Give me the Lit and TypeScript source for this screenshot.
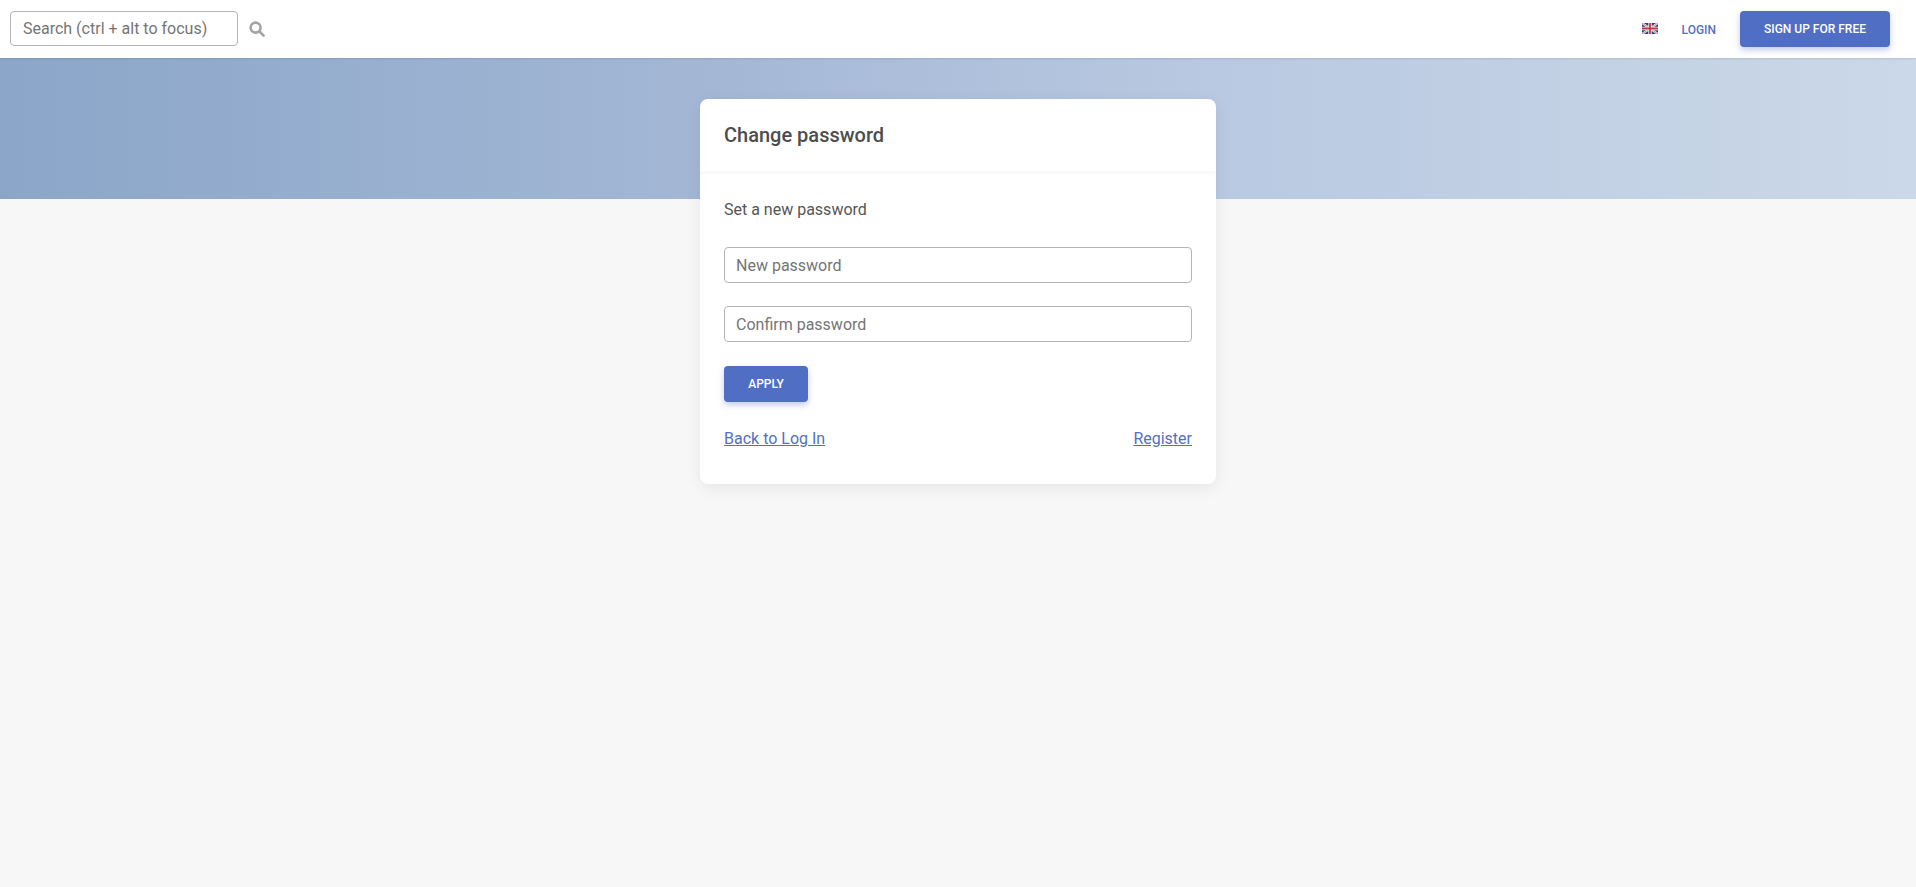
import { LitElement, html, css } from "lit";
import { customElement } from "lit/decorators.js";

@customElement("app-root")
export class AppRoot extends LitElement {
  static styles = css`
    :host { display: block; min-height: 887px; background: #f7f7f7; font-family: Roboto, "Liberation Sans", sans-serif; color: #4a4a4a; position: relative; }
    * { box-sizing: border-box; }
    .nav { height: 58px; background: #fff; display: flex; align-items: center; padding: 0 26px 0 10px; box-shadow: 0 1px 2px rgba(0,0,0,.1); position: relative; z-index: 2; }
    .search { width: 228px; height: 35px; border: 1px solid #b5b5b5; border-radius: 4px; padding: 0 12px; font-size: 16px; line-height: 33px; color: #757575; margin-top: -1px; }
    .mag { margin-left: 11px; width: 16px; height: 16px; display: block; }
    .spacer { flex: 1; }
    .flag { width: 16px; height: 11px; display: block; margin-top: -1px; }
    .login { margin: 1px 0 0 24px; font-size: 12px; font-weight: 500; color: #5470c0; text-transform: uppercase; }
    .cta, .apply { background: #4f6ec4; color: #fff; border-radius: 4px; font-weight: 500; font-size: 12px; display: flex; align-items: center; justify-content: center; box-shadow: 0 3px 6px rgba(79,110,196,.35); text-transform: uppercase; }
    .cta { margin-left: 24px; width: 150px; height: 36px; }
    .banner { height: 141px; background: linear-gradient(90deg, #8ba6c9 0%, #a3b7d5 36.5%, #b9c9e1 63.5%, #cbd8e8 100%); }
    .main { display: flex; justify-content: center; margin-top: -100px; }
    .card { width: 516px; height: 385px; background: #fff; border-radius: 8px; box-shadow: 0 4px 16px rgba(0,0,0,.07); }
    .head { height: 75px; display: flex; align-items: center; padding: 0 24px; border-bottom: 3px solid #f9f9f9; font-size: 20px; font-weight: 500; color: #4d4d4d; }
    .body { padding: 26px 24px 0; display: flex; flex-direction: column; }
    .intro { font-size: 16px; line-height: 19px; color: #555; margin-bottom: 28px; }
    .input { height: 36px; border: 1px solid #b5b5b5; border-radius: 4px; padding: 2px 11px 0; font-size: 16px; line-height: 32px; color: #757575; margin-bottom: 23px; }
    .apply { width: 84px; height: 36px; margin-top: 1px; }
    .links { display: flex; justify-content: space-between; margin-top: 27px; font-size: 16px; line-height: 19px; }
    .links a { color: #5470c0; text-decoration: underline; }
  `;

  render() {
    return html`
      <div class="nav">
        <div class="search">Search (ctrl + alt to focus)</div>
        <svg class="mag" viewBox="0 0 16 16" fill="none" stroke="#a3a3a8" stroke-width="2.6" stroke-linecap="round">
          <circle cx="6.6" cy="6.6" r="5"></circle><path d="M10.5 10.5 L14.6 14.6"></path>
        </svg>
        <div class="spacer"></div>
        <svg class="flag" viewBox="0 0 16 11">
          <rect width="16" height="11" fill="#333c78"></rect>
          <path d="M0 0 L16 11 M16 0 L0 11" stroke="#eeeef4" stroke-width="2.2"></path>
          <path d="M0 0 L16 11 M16 0 L0 11" stroke="#a8505c" stroke-width=".6"></path>
          <path d="M8 0 V11 M0 5.5 H16" stroke="#f5f5f8" stroke-width="3.4"></path>
          <path d="M8 0 V11 M0 5.5 H16" stroke="#c23a44" stroke-width="1.8"></path>
        </svg>
        <span class="login">Login</span>
        <div class="cta">Sign up for free</div>
      </div>
      <div class="banner"></div>
      <div class="main">
        <div class="card">
          <div class="head">Change password</div>
          <div class="body">
            <div class="intro">Set a new password</div>
            <div class="input">New password</div>
            <div class="input">Confirm password</div>
            <div class="apply">Apply</div>
            <div class="links"><a href="#">Back to Log In</a><a href="#">Register</a></div>
          </div>
        </div>
      </div>
    `;
  }
}
